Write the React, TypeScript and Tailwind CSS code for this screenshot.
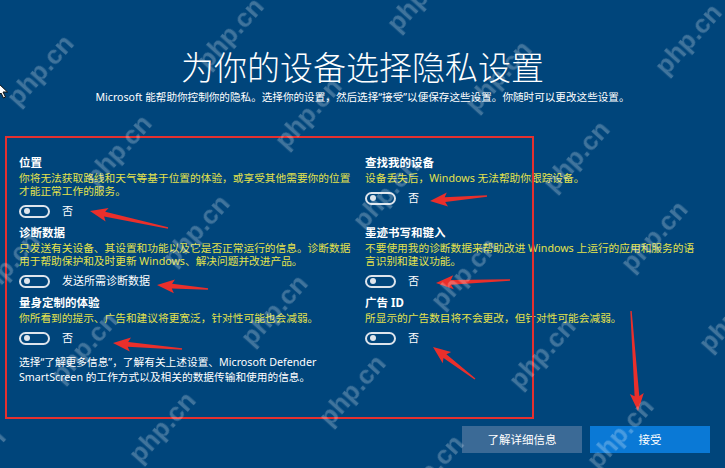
import React from "react";

type Setting = { title: string; desc: string; label: string };

// rows are read left cell first, then right cell
const settings: Setting[] = [
  {
    title: "位置",
    desc: "你将无法获取路线和天气等基于位置的体验，或享受其他需要你的位置才能正常工作的服务。",
    label: "否",
  },
  {
    title: "查找我的设备",
    desc: "设备丢失后，Windows 无法帮助你跟踪设备。",
    label: "否",
  },
  {
    title: "诊断数据",
    desc: "只发送有关设备、其设置和功能以及它是否正常运行的信息。诊断数据用于帮助保护和及时更新 Windows、解决问题并改进产品。",
    label: "发送所需诊断数据",
  },
  {
    title: "墨迹书写和键入",
    desc: "不要使用我的诊断数据来帮助改进 Windows 上运行的应用和服务的语言识别和建议功能。",
    label: "否",
  },
  {
    title: "量身定制的体验",
    desc: "你所看到的提示、广告和建议将更宽泛，针对性可能也会减弱。",
    label: "否",
  },
  {
    title: "广告 ID",
    desc: "所显示的广告数目将不会更改，但针对性可能会减弱。",
    label: "否",
  },
];

// red callout arrows: [tailX, tailY, tipX, tipY]
const arrows: [number, number, number, number][] = [
  [168, 228, 90, 211],
  [208, 289, 157, 285],
  [182, 349, 113, 343],
  [487, 196, 430, 201],
  [510, 280, 436, 283],
  [475, 379, 433, 347],
  [631, 311, 638, 411],
];

function arrowPoints([x1, y1, x2, y2]: [number, number, number, number]) {
  const len = Math.hypot(x2 - x1, y2 - y1);
  const ux = (x2 - x1) / len;
  const uy = (y2 - y1) / len;
  const nx = -uy;
  const ny = ux;
  const head = 15;
  const bx = x2 - ux * head;
  const by = y2 - uy * head;
  const pt = (x: number, y: number) => `${x.toFixed(1)},${y.toFixed(1)}`;
  return [
    pt(x1 + nx * 0.7, y1 + ny * 0.7),
    pt(bx + nx * 2.4, by + ny * 2.4),
    pt(bx - ux * 2.5 + nx * 7, by - uy * 2.5 + ny * 7),
    pt(x2, y2),
    pt(bx - ux * 2.5 - nx * 7, by - uy * 2.5 - ny * 7),
    pt(bx - nx * 2.4, by - ny * 2.4),
    pt(x1 - nx * 0.7, y1 - ny * 0.7),
  ].join(" ");
}

// site stamp tiled across the shot
const stamps: { x: number; y: number }[] = [];
for (let i = -4; i <= 9; i++) {
  for (let j = -3; j <= 5; j++) {
    const x = 40 + i * 78 + j * 190;
    const y = 70 + i * 80 - j * 37;
    if (x > -60 && x < 785 && y > -50 && y < 520) stamps.push({ x, y });
  }
}

function Toggle({ label }: { label: string }) {
  return (
    <div className="mt-[6px] flex h-[14px] items-center">
      <span className="flex h-[13px] w-[31px] items-center rounded-full border-2 border-[#dde4ec] pl-[3px]">
        <span className="h-[6px] w-[6px] rounded-full bg-[#dde4ec]" />
      </span>
      <span className="ml-[12px] text-[11px] leading-[14px] text-white">{label}</span>
    </div>
  );
}

export default function App() {
  return (
    <div className="relative flex h-[468px] w-[725px] flex-col overflow-hidden bg-[#00457b] font-['Noto_Sans','Noto_Sans_CJK_SC',sans-serif] text-white">
      <h1 className="pt-[46px] text-center font-['Noto_Sans_CJK_SC',sans-serif] text-[33px] font-light leading-[40px]">
        为你的设备选择隐私设置
      </h1>
      <p className="mt-[4px] text-center text-[10.6px] leading-[14px]">
        Microsoft 能帮助你控制你的隐私。选择你的设置，然后选择“接受”以便保存这些设置。你随时可以更改这些设置。
      </p>

      <div className="mt-[52px] grid grid-cols-[336px_336px] gap-x-[10px] gap-y-[8px] pl-[19px]">
        {settings.map((s, i) => (
          <div key={s.title}>
            <div className="text-[11.5px] font-bold leading-[14px]">{s.title}</div>
            <p className="mt-[2px] text-[10.7px] leading-[13px] text-[#e4e24c]">{s.desc}</p>
            <Toggle label={s.label} />
            {i === 4 && (
              <p className="mt-[10px] text-[10.7px] leading-[15px] text-white">
                选择“了解更多信息”，了解有关上述设置、Microsoft Defender SmartScreen 的工作方式以及相关的数据传输和使用的信息。
              </p>
            )}
          </div>
        ))}
      </div>

      <div className="mt-auto flex justify-end gap-[8px] pb-[15px] pr-[15px]">
        <button className="h-[27px] w-[120px] bg-[#3b6a96] text-[11.5px] text-white">了解详细信息</button>
        <button className="h-[27px] w-[120px] bg-[#0a79d6] text-[11.5px] text-white">接受</button>
      </div>

      {/* callout frame */}
      <div className="pointer-events-none absolute left-[5px] top-[136px] h-[283px] w-[529px] border-2 border-[#e5302f]" />

      <svg className="pointer-events-none absolute left-0 top-0" width="725" height="468">
        {arrows.map((a, i) => (
          <polygon key={i} points={arrowPoints(a)} fill="#ea2f2b" />
        ))}
      </svg>

      {/* mouse pointer at the left edge */}
      <svg className="absolute left-[-3px] top-[82px]" width="12" height="17" viewBox="0 0 12 17">
        <path d="M1 1 L1 14 L4 11 L6.5 16 L8.5 15 L6 10 L10.5 10 Z" fill="#fff" stroke="#111" strokeWidth="1" />
      </svg>

      <div className="pointer-events-none absolute inset-0">
        {stamps.map((p, i) => (
          <span
            key={i}
            className="absolute font-['Liberation_Sans',sans-serif] text-[26px] font-bold leading-none text-white/25 blur-[0.4px]"
            style={{ left: p.x, top: p.y, transform: "translate(-50%, -50%) rotate(-48deg)" }}
          >
            php.cn
          </span>
        ))}
      </div>
    </div>
  );
}
